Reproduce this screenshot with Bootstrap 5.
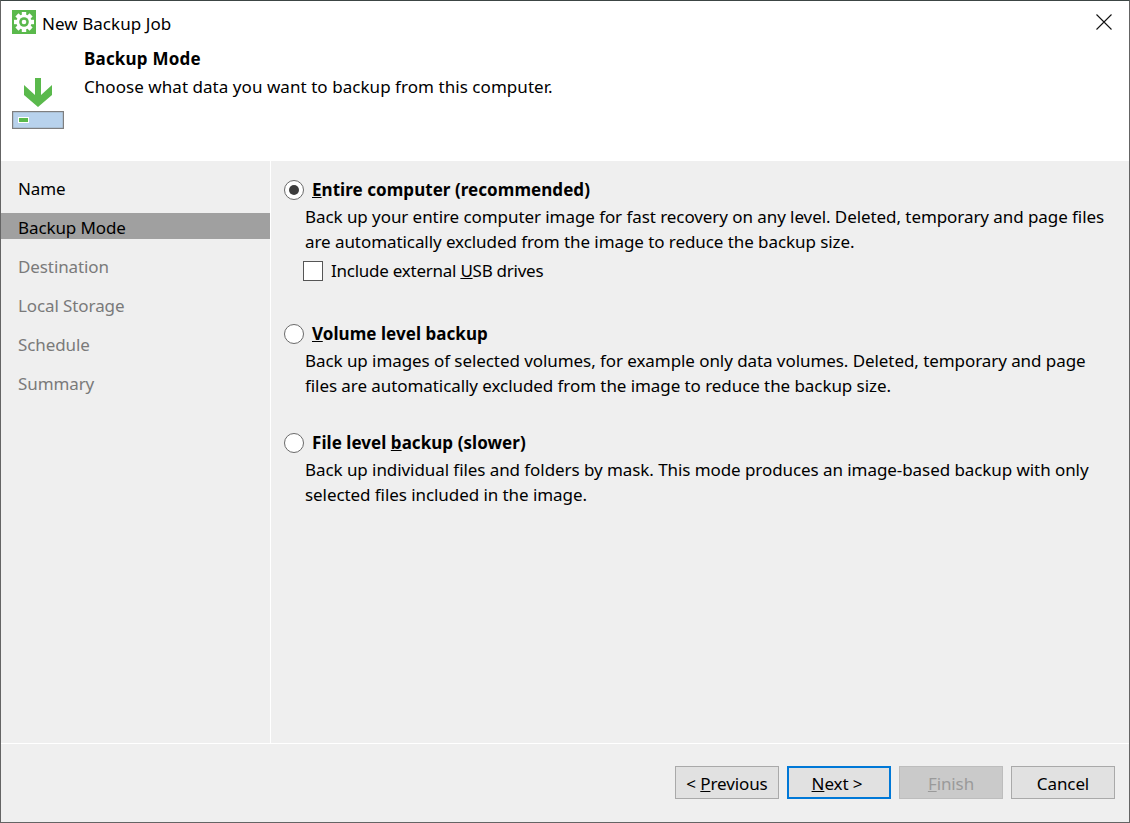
<!DOCTYPE html>
<html lang="en">
<head>
<meta charset="utf-8">
<title>New Backup Job</title>
<link href="https://cdn.jsdelivr.net/npm/bootstrap@5.3.0/dist/css/bootstrap.min.css" rel="stylesheet">
<style>
html,body{height:100%;margin:0;background:#efefef;}
body{font-family:"Noto Sans","Open Sans",sans-serif;font-size:17px;letter-spacing:.05px;line-height:25px;color:#000;overflow:hidden;}
.win{width:1130px;height:823px;border:1px solid #646464;border-top-color:#3c4544;background:#efefef;}
.head{height:160px;background:#fff;flex:none;}
.titlebar{height:46px;padding:9px 0 0 11px;}
.app-ico{width:24px;height:24px;flex:none;}
.win-title{margin:2px 0 0 6px;line-height:24px;}
.close-x{width:50px;height:46px;background:none;border:0;padding:0 0 7px 0;margin-top:-9px;}
.head-ico{width:83px;padding:31px 0 0 11px;flex:none;}
.head-title{font-weight:700;line-height:25px;margin-top:-1px;letter-spacing:.2px;}
.head-desc{margin-top:3px;}
.side{width:270px;border-right:1px solid #fff;padding-top:13px;flex:none;}
.side-item{height:26px;line-height:26px;padding:2px 0 0 17px;margin-bottom:13px;color:#7a7a7a;letter-spacing:-.1px;}
.side-item.done{color:#000;}
.side-item.now{background:#a0a0a0;color:#000;}
.pane{padding:16px 14px 0 13px;}
.opt{display:flex;align-items:center;height:25px;}
.radio-o{width:20px;height:20px;border-radius:50%;border:1.5px solid #6a6a6a;background:#fff;flex:none;margin-right:8px;display:flex;align-items:center;justify-content:center;}
.radio-o.on::after{content:"";width:10px;height:10px;border-radius:50%;background:#3c3c3c;}
.opt-label{font-weight:700;}
.opt-desc{padding-left:21px;width:831px;margin:2px 0 0;letter-spacing:-.07px;}
.chk{display:flex;align-items:center;margin:4px 0 0 19px;letter-spacing:-.25px;}
.chk-box{width:20px;height:20px;border:1px solid #555;background:#fff;flex:none;margin-right:8px;}
.group-b{margin-top:38px;}
.group-c{margin-top:32px;}
.foot{height:79px;border-top:1px solid #fff;flex:none;padding:22px 14px 0 0;}
.wbtn{width:104px;height:33px;border:1px solid #a9a9a9;background:#e1e1e1;color:#000;font-size:17px;line-height:29px;padding:2px 0 0;border-radius:0;letter-spacing:-.1px;}
.wbtn.def{border:2px solid #0078d7;line-height:27px;padding:2px 4px 0 0;}
.wbtn:disabled{background:#cacaca;border-color:#bdbdbd;color:#9a9a9a;opacity:1;}
</style>
</head>
<body>
<div class="win d-flex flex-column">
  <div class="head">
    <div class="titlebar d-flex align-items-start">
      <svg class="app-ico" viewBox="0 0 24 24"><rect width="24" height="24" fill="#5ab94c"/><g fill="#fff"><rect x="9.800" y="2" width="4.400" height="20"/><rect x="9.800" y="2" width="4.400" height="20" transform="rotate(45 12 12)"/><rect x="9.800" y="2" width="4.400" height="20" transform="rotate(90 12 12)"/><rect x="9.800" y="2" width="4.400" height="20" transform="rotate(135 12 12)"/><circle cx="12" cy="12" r="7.600"/></g><circle cx="12" cy="12" r="4.800" fill="#5ab94c"/><circle cx="12" cy="12" r="2.300" fill="#fff"/></svg>
      <span class="win-title">New Backup Job</span>
      <button class="close-x ms-auto" aria-label="Close"><svg width="16" height="16" viewBox="0 0 16 16"><path d="M.5.5l15 15M15.500.5l-15 15" stroke="#111" stroke-width="1.1" fill="none"/></svg></button>
    </div>
    <div class="d-flex">
      <div class="head-ico">
        <svg width="52" height="51" viewBox="0 0 52 51" class="d-block"><path fill="#5ab94c" d="M23 0h6v17L40 7v10L26 29 12 17V7l11 10z"/><rect x=".6" y="33.600" width="50.800" height="16.800" fill="#b8d2ec" stroke="#7f7f7f" stroke-width="1.200"/><rect x="6.500" y="39.500" width="10" height="5" fill="#5ab94c" stroke="#fff"/></svg>
      </div>
      <div>
        <div class="head-title">Backup Mode</div>
        <div class="head-desc">Choose what data you want to backup from this computer.</div>
      </div>
    </div>
  </div>
  <div class="d-flex flex-grow-1">
    <div class="side">
      <div class="side-item done">Name</div>
      <div class="side-item now">Backup Mode</div>
      <div class="side-item">Destination</div>
      <div class="side-item">Local Storage</div>
      <div class="side-item">Schedule</div>
      <div class="side-item">Summary</div>
    </div>
    <div class="pane flex-grow-1">
      <div class="opt"><span class="radio-o on"></span><span class="opt-label"><u>E</u>ntire computer (recommended)</span></div>
      <p class="opt-desc">Back up your entire computer image for fast recovery on any level. Deleted, temporary and page files are automatically excluded from the image to reduce the backup size.</p>
      <div class="chk"><span class="chk-box"></span><span>Include external <u>U</u>SB drives</span></div>
      <div class="opt group-b"><span class="radio-o"></span><span class="opt-label"><u>V</u>olume level backup</span></div>
      <p class="opt-desc">Back up images of selected volumes, for example only data volumes. Deleted, temporary and page files are automatically excluded from the image to reduce the backup size.</p>
      <div class="opt group-c"><span class="radio-o"></span><span class="opt-label">File level <u>b</u>ackup (slower)</span></div>
      <p class="opt-desc">Back up individual files and folders by mask. This mode produces an image-based backup with only selected files included in the image.</p>
    </div>
  </div>
  <div class="foot d-flex justify-content-end gap-2">
    <button class="btn wbtn">&lt; <u>P</u>revious</button>
    <button class="btn wbtn def"><u>N</u>ext &gt;</button>
    <button class="btn wbtn" disabled><u>F</u>inish</button>
    <button class="btn wbtn">Cancel</button>
  </div>
</div>
</body>
</html>
